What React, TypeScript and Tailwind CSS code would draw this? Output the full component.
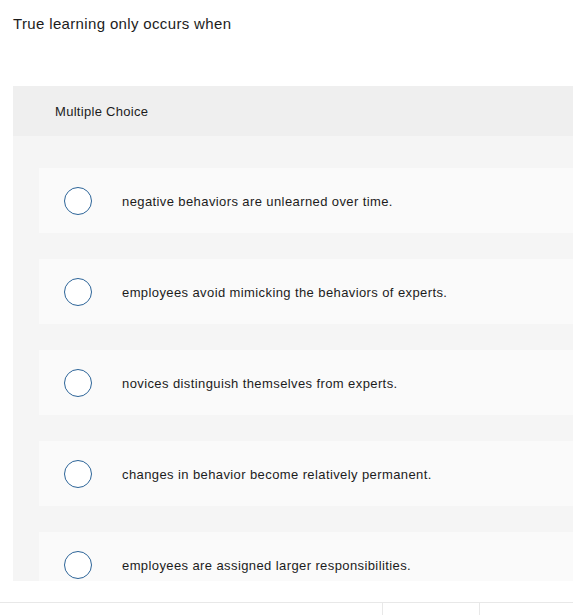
import React from 'react';

const options = [
  'negative behaviors are unlearned over time.',
  'employees avoid mimicking the behaviors of experts.',
  'novices distinguish themselves from experts.',
  'changes in behavior become relatively permanent.',
  'employees are assigned larger responsibilities.',
];

const Radio: React.FC = () => (
  <span className="w-[28px] h-[28px] shrink-0 rounded-full border-[1.5px] border-[#2c6498] bg-white" />
);

export default function App() {
  return (
    <div className="w-full h-[615px] overflow-hidden bg-white text-[#1c1c1c] font-['Liberation_Sans',Arial,sans-serif]">
      <p className="pl-[13px] pt-[14px] text-[15px] leading-[20px] tracking-[0.35px]">True learning only occurs when</p>

      <div className="mt-[52px] ml-[13px] -mr-[40px] h-[495px] overflow-hidden bg-[#f5f5f5]">
        <div className="h-[50px] flex items-center pl-[42px] pt-[1px] bg-[#efefef] text-[13px] tracking-[0.3px]">Multiple Choice</div>
        <div className="pt-[32px] pl-[26px] flex flex-col gap-[26px]">
          {options.map((o) => (
            <div key={o} className="h-[65px] shrink-0 flex items-center pl-[25px] gap-[30px] bg-[#fafafa] text-[13px] tracking-[0.4px]">
              <Radio />
              <span className="pt-[2px]">{o}</span>
            </div>
          ))}
        </div>
      </div>

      <div className="mt-[21px] border-t border-[#e8e8e8] h-[40px] flex">
        <div className="w-[383px] border-r border-[#e8e8e8]" />
        <div className="w-[97px] border-r border-[#e8e8e8]" />
      </div>
    </div>
  );
}
